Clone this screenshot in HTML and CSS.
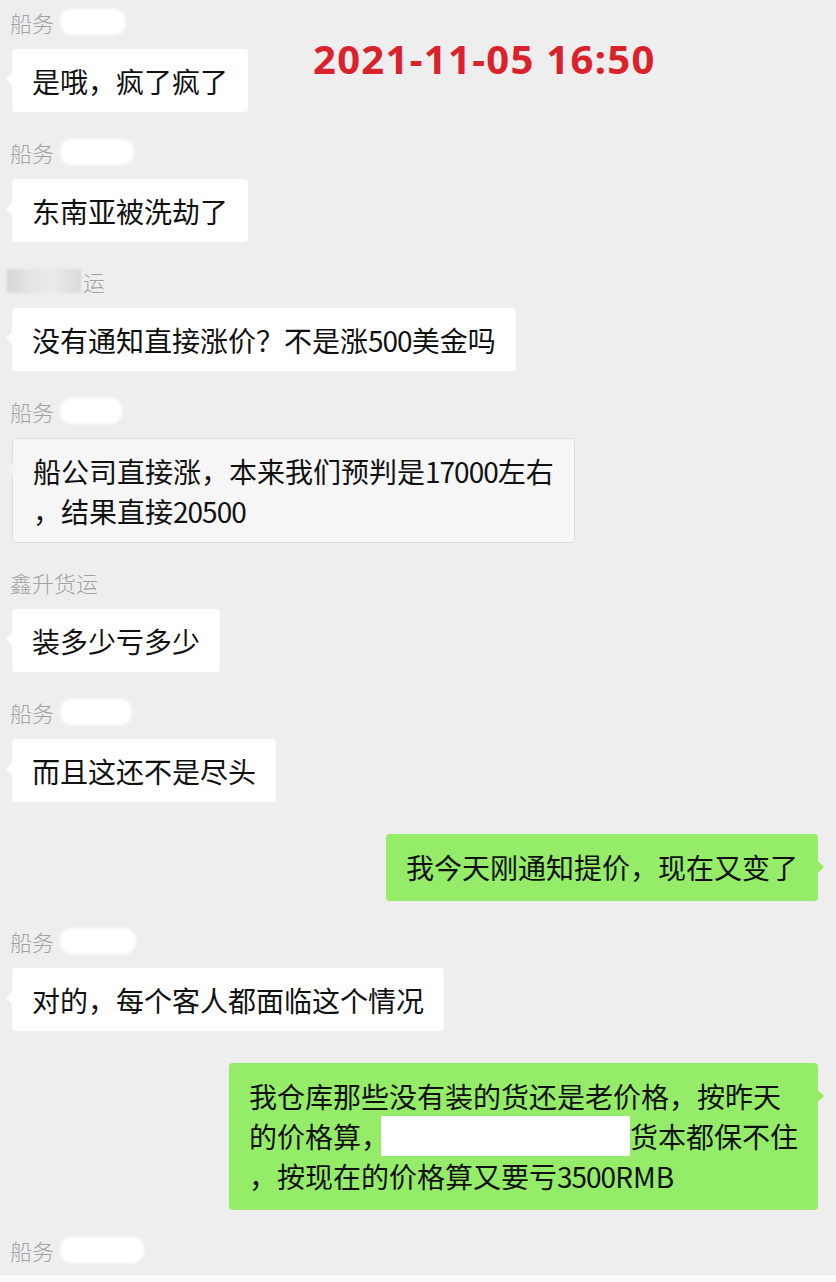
FILE: index.html
```html
<!DOCTYPE html>
<html lang="zh-CN">
<head>
  <meta charset="UTF-8" />
  <title>聊天记录</title>
  <link rel="stylesheet" href="styles.css">
</head>
<body>
  <div class="chat">
    <!-- 时间标注 -->
    <div class="stamp">2021-11-05 16:50</div>

    <div class="msg">
      <div class="name">船务<span class="mask w66"></span></div>
      <div class="bubble">是哦，疯了疯了</div>
    </div>

    <div class="msg">
      <div class="name">船务<span class="mask w74"></span></div>
      <div class="bubble">东南亚被洗劫了</div>
    </div>

    <div class="msg">
      <div class="name"><span class="smear"></span>运</div>
      <div class="bubble">没有通知直接涨价？不是涨<span class="num">500</span>美金吗</div>
    </div>

    <div class="msg">
      <div class="name">船务<span class="mask w62"></span></div>
      <div class="bubble plain">船公司直接涨，本来我们预判是<span class="num">17000</span>左右<br>，结果直接<span class="num">20500</span></div>
    </div>

    <div class="msg">
      <div class="name">鑫升货运</div>
      <div class="bubble">装多少亏多少</div>
    </div>

    <div class="msg">
      <div class="name">船务<span class="mask w72"></span></div>
      <div class="bubble">而且这还不是尽头</div>
    </div>

    <div class="msg self">
      <div class="bubble">我今天刚通知提价，现在又变了</div>
    </div>

    <div class="msg">
      <div class="name">船务<span class="mask w76"></span></div>
      <div class="bubble">对的，每个客人都面临这个情况</div>
    </div>

    <div class="msg self">
      <div class="bubble">我仓库那些没有装的货还是老价格，按昨天<br>的价格算，<span class="redact"></span>货本都保不住<br>，按现在的价格算又要亏<span class="num">3500</span>RMB</div>
    </div>

    <div class="msg">
      <div class="name">船务<span class="mask w84"></span></div>
    </div>
  </div>
  <div class="footer"></div>
</body>
</html>
```

FILE: styles.css
```css
/* Page */
html, body {
  margin: 0;
  padding: 0;
  height: 1282px;
  overflow: hidden;
  background: #eeeeef;
  font-family: "Noto Sans CJK SC", sans-serif;
  color: #111;
}

.chat {
  position: relative;
  display: flex;
  flex-direction: column;
  gap: 26.5px;
  padding: 9px 18px 0 12px;
}

/* annotation over the chat */
.stamp {
  position: absolute;
  left: 313px;
  top: 35px;
  color: #d9222b;
  font: bold 40px/48px "Noto Sans", sans-serif;
  letter-spacing: 1.3px;
}

.msg {
  display: flex;
  flex-direction: column;
  align-items: flex-start;
}
.msg.self {
  align-items: flex-end;
  margin-top: 6px;
}

.name {
  display: flex;
  align-items: center;
  height: 26px;
  margin-left: -2px;
  font-size: 22px;
  line-height: 26px;
  color: #a2a2a2;
  font-weight: 300;
}

/* blurred-out names */
.mask {
  display: inline-block;
  height: 26px;
  margin-left: 6px;
  background: #fff;
  border-radius: 12px;
  filter: blur(1.5px);
}
.w62 { width: 62px; }
.w66 { width: 66px; }
.w72 { width: 72px; }
.w74 { width: 74px; }
.w76 { width: 76px; }
.w84 { width: 84px; }

.smear {
  display: inline-block;
  width: 74px;
  height: 24px;
  margin-left: -3px;
  margin-right: 2px;
  background: linear-gradient(90deg, #d7d7d7 0, #e4e4e4 30%, #ebebeb 60%, #dadada 100%);
  filter: blur(1px);
}

.bubble {
  position: relative;
  margin-top: 14px;
  padding: 12px 20px 11px;
  background: #fff;
  border-radius: 4px;
  font-size: 28px;
  line-height: 40px;
  color: #111;
}
.bubble::before {
  content: "";
  position: absolute;
  left: -6px;
  top: 24px;
  border-top: 6px solid transparent;
  border-bottom: 6px solid transparent;
  border-right: 6px solid #fff;
}

.bubble.plain {
  background: #f6f6f7;
  border: 1px solid #dedede;
  border-radius: 3px;
}
.bubble.plain::before {
  border-right-color: #f3f3f4;
}

.self .bubble {
  margin-top: 0;
  padding: 13px 20px 14px;
  background: #95ec69;
}
.self .bubble::before {
  left: auto;
  right: -6px;
  top: 27px;
  border-right: 0;
  border-left: 6px solid #95ec69;
}

.num {
  letter-spacing: -1px;
}

.redact {
  display: inline-block;
  width: 249px;
  height: 40px;
  margin-left: -8px;
  vertical-align: top;
  background: #fff;
}

/* bottom edge of the capture */
.footer {
  height: 20px;
  margin-top: 11px;
  background: #fafafa;
  border-top: 1px solid #e8e8e8;
}
```
